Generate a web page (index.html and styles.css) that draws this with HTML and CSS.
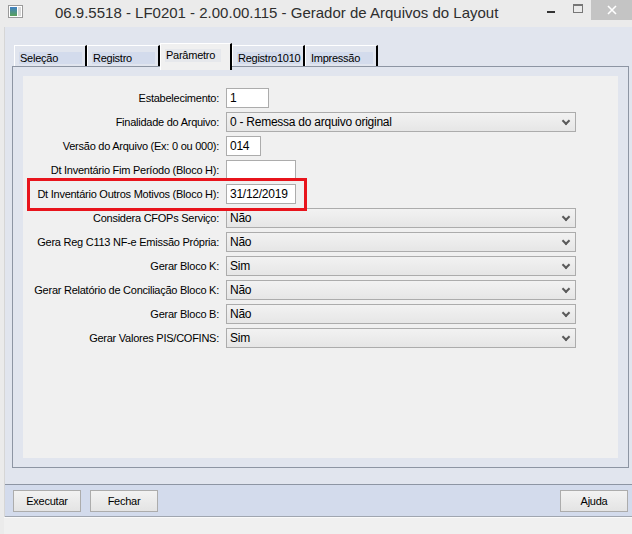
FILE: index.html
```html
<!DOCTYPE html>
<html lang="pt-BR">
<head>
  <meta charset="UTF-8">
  <title>Gerador de Arquivos do Layout</title>
  <link rel="stylesheet" href="styles.css">
</head>
<body>

  <div class="titlebar">
    <svg class="app-icon" width="15" height="13" viewBox="0 0 15 13">
      <defs>
        <linearGradient id="ico" x1="0" y1="0" x2="0" y2="1">
          <stop offset="0" stop-color="#3f7fc4"/>
          <stop offset="1" stop-color="#5aa25a"/>
        </linearGradient>
      </defs>
      <rect x="0.5" y="0.5" width="14" height="12" fill="#fff" stroke="#9a9a9a"/>
      <rect x="2" y="2" width="7" height="9" fill="url(#ico)"/>
      <rect x="10" y="2" width="3" height="9" fill="#d8d8d8"/>
    </svg>
    <span class="title">06.9.5518 - LF0201 - 2.00.00.115 - Gerador de Arquivos do Layout</span>
    <div class="win-ctrls">
      <span class="win-min"></span>
      <span class="win-max"></span>
      <span class="win-close">
        <svg width="10" height="10" viewBox="0 0 10 10"><path d="M1 1L9 9M9 1L1 9" stroke="#fff" stroke-width="1.6"/></svg>
      </span>
    </div>
  </div>

  <div class="frame">
    <div class="client">

      <div class="tabs">
        <div class="tab"><span>Seleção</span></div>
        <div class="tab"><span>Registro</span></div>
        <div class="tab active"><span>Parâmetro</span></div>
        <div class="tab"><span>Registro1010</span></div>
        <div class="tab"><span>Impressão</span></div>
      </div>

      <div class="panel">
        <div class="page">
          <div class="form">
            <label>Estabelecimento:</label>
            <div class="field w-est">1</div>

            <label>Finalidade do Arquivo:</label>
            <div class="combo">0 - Remessa do arquivo original</div>

            <label>Versão do Arquivo (Ex: 0 ou 000):</label>
            <div class="field w-ver">014</div>

            <label>Dt Inventário Fim Período (Bloco H):</label>
            <div class="field w-dt"></div>

            <label>Dt Inventário Outros Motivos (Bloco H):</label>
            <div class="field w-dt">31/12/2019</div>

            <label>Considera CFOPs Serviço:</label>
            <div class="combo">Não</div>

            <label>Gera Reg C113 NF-e Emissão Própria:</label>
            <div class="combo">Não</div>

            <label>Gerar Bloco K:</label>
            <div class="combo">Sim</div>

            <label>Gerar Relatório de Conciliação Bloco K:</label>
            <div class="combo">Não</div>

            <label>Gerar Bloco B:</label>
            <div class="combo">Não</div>

            <label>Gerar Valores PIS/COFINS:</label>
            <div class="combo">Sim</div>
          </div>
          <div class="highlight"></div>
        </div>
      </div>

      <div class="buttonbar">
        <button>Executar</button>
        <button>Fechar</button>
        <button class="right">Ajuda</button>
      </div>
    </div>
    <div class="statusbar"></div>
  </div>

</body>
</html>
```

FILE: styles.css
```css
body {
  margin: 0;
  width: 632px;
  height: 534px;
  overflow: hidden;
  background: #ebebeb;
  font-family: 'Liberation Sans', Arial, sans-serif;
  font-size: 11px;
  letter-spacing: -0.25px;
  color: #000;
}

/* window caption */
.titlebar {
  height: 27px;
  display: flex;
  align-items: flex-start;
  position: relative;
  background: #ebebeb;
}

.app-icon {
  margin: 5px 0 0 8px;
}

.title {
  margin: 4px 0 0 32px;
  font-size: 15px;
  letter-spacing: 0;
  color: #2e2e2e;
}

.win-ctrls {
  margin-left: auto;
  display: flex;
  height: 20px;
}

.win-min {
  width: 8px;
  height: 2px;
  background: #333;
  margin: 11px 18px 0 0;
}

.win-max {
  width: 8px;
  height: 6px;
  border: 1px solid #777;
  border-top-width: 2px;
  margin: 4px 8px 0 0;
}

.win-close {
  width: 41px;
  height: 20px;
  background: #c4c4c4;
  display: flex;
  align-items: center;
  justify-content: center;
}

/* window body */
.frame {
  padding-left: 4px;
  background: #ebebeb;
}

.client {
  border-left: 1px solid #d6d6d6;
  background: #e1e5ee;
  padding-top: 16px;
}

.tabs {
  display: flex;
  height: 23px;
  margin-left: 9px;
  position: relative;
  z-index: 1;
}

.tab {
  width: 73px;
  margin-top: 2px;
  height: 21px;
  border-top: 1px solid #fff;
  border-left: 1px solid #fff;
  border-right: 2px solid #000;
  box-sizing: border-box;
  padding: 6px 3px 0 4px;
}

.tab span {
  display: block;
  background: #d3dbec;
  height: 12px;
  line-height: 12px;
  padding-left: 1px;
  white-space: nowrap;
}

.tab.active {
  margin-top: 0;
  height: 27px;
  background: #f0f0f0;
  padding-top: 5px;
  width: 72px;
}

.tab.active span {
  background: #e6e8ec;
  width: 55px;
  line-height: 12px;
  height: 13px;
}

.panel {
  margin: 0 3px 0 7px;
  border: 1px solid #8d95a3;
  padding: 9px 10px 9px 10px;
}

.page {
  position: relative;
  background: #f0f0f0;
  height: 382px;
  padding-top: 12px;
  box-sizing: border-box;
}

.form {
  display: grid;
  grid-template-columns: 196px auto;
  column-gap: 7px;
  row-gap: 4px;
  align-items: center;
  justify-items: start;
}

.form label {
  justify-self: end;
  white-space: nowrap;
}

.field {
  height: 20px;
  box-sizing: border-box;
  border: 1px solid #acacac;
  background: #fff;
  padding: 0 3px;
  line-height: 18px;
  font-size: 12px;
}

.w-est { width: 43px; }
.w-ver { width: 35px; }
.w-dt  { width: 70px; }

.combo {
  width: 350px;
  height: 20px;
  box-sizing: border-box;
  border: 1px solid #acacac;
  background: linear-gradient(#f2f2f2, #e6e6e6);
  padding: 0 3px;
  line-height: 18px;
  font-size: 12px;
  position: relative;
}

.combo::after {
  content: "";
  position: absolute;
  right: 6px;
  top: 5px;
  width: 4px;
  height: 4px;
  border-right: 2px solid #5a5a5a;
  border-bottom: 2px solid #5a5a5a;
  transform: rotate(45deg);
}

/* red marker drawn over the inventory date row */
.highlight {
  position: absolute;
  left: 4px;
  top: 102px;
  width: 280px;
  height: 33px;
  box-sizing: border-box;
  border: 3px solid #e8141c;
}

.buttonbar {
  margin-top: 16px;
  height: 33px;
  box-sizing: border-box;
  border-top: 1px solid #8d95a3;
  border-bottom: 1px solid #a0a6b0;
  background: #d3dbec;
  display: flex;
  align-items: center;
  padding: 0 4px 0 8px;
  gap: 9px;
}

button {
  width: 68px;
  height: 22px;
  border: 1px solid #acacac;
  background: linear-gradient(#f2f2f2, #e4e4e4);
  font-family: inherit;
  font-size: 11px;
  letter-spacing: -0.25px;
  color: #000;
  padding: 0;
}

button.right {
  margin-left: auto;
}

.statusbar {
  height: 17px;
  border-top: 1px solid #fafafa;
  background: #f0f0f0;
}
```
